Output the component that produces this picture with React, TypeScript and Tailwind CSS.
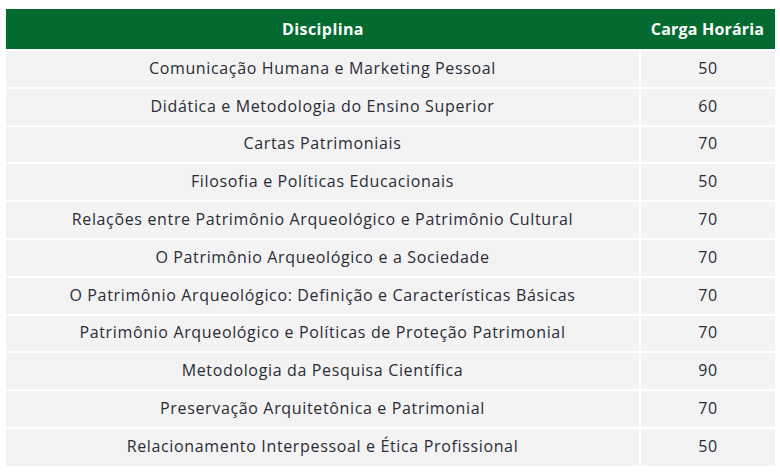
const rows: [string, string][] = [
  ['Comunicação Humana e Marketing Pessoal', '50'],
  ['Didática e Metodologia do Ensino Superior', '60'],
  ['Cartas Patrimoniais', '70'],
  ['Filosofia e Políticas Educacionais', '50'],
  ['Relações entre Patrimônio Arqueológico e Patrimônio Cultural', '70'],
  ['O Patrimônio Arqueológico e a Sociedade', '70'],
  ['O Patrimônio Arqueológico: Definição e Características Básicas', '70'],
  ['Patrimônio Arqueológico e Políticas de Proteção Patrimonial', '70'],
  ['Metodologia da Pesquisa Científica', '90'],
  ['Preservação Arquitetônica e Patrimonial', '70'],
  ['Relacionamento Interpessoal e Ética Profissional', '50'],
]

export default function App() {
  return (
    <div className="w-[780px] h-[476px] bg-white pt-[9px] pl-[6px] font-['Open_Sans',sans-serif]">
      <table className="w-[769px] border-collapse">
        <thead>
          <tr className="bg-[#036b30] text-white h-[41px]">
            <th className="w-[634px] text-[16px] font-bold tracking-[0.4px] text-center">Disciplina</th>
            <th className="text-[16px] font-bold tracking-[0.2px] text-center">Carga Horária</th>
          </tr>
        </thead>
        <tbody>
          {rows.map(([name, hours]) => (
            <tr key={name} className="bg-[#f3f3f3] h-[37.8px] text-[16px] tracking-[0.65px] text-[#2b2b36]">
              <td className="text-center border-t-2 border-white pb-[2px]">{name}</td>
              <td className="text-center border-t-2 border-l-2 border-white pb-[2px]">{hours}</td>
            </tr>
          ))}
        </tbody>
      </table>
    </div>
  )
}
